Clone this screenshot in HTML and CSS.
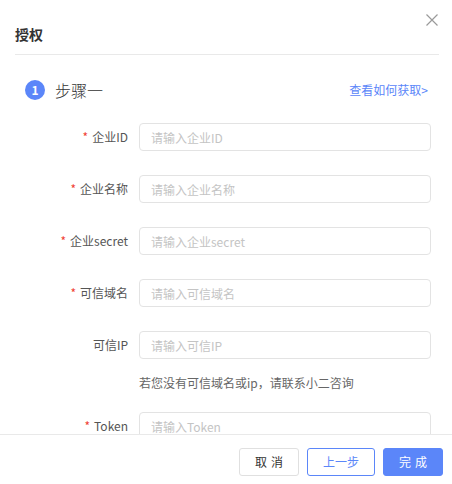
FILE: index.html
```html
<!DOCTYPE html>
<html lang="zh-CN">
<head>
<meta charset="utf-8">
<title>授权</title>
<link rel="stylesheet" href="styles.css">
</head>
<body>
<div class="modal">
  <div class="modal-header">
    <div class="modal-title">授权</div>
  </div>
  <button class="modal-close" aria-label="关闭">
    <svg width="12" height="12" viewBox="0 0 12 12"><path d="M0.5 0.5L11.5 11.5M11.5 0.5L0.5 11.5" stroke="#9a9a9a" stroke-width="1.2" fill="none"/></svg>
  </button>
  <div class="modal-body">
    <div class="step-row">
      <div class="step-title">
        <span class="step-num">1</span>
        <span class="step-text">步骤一</span>
      </div>
      <a class="step-link">查看如何获取&gt;</a>
    </div>
    <div class="form">
      <div class="form-item">
        <label class="form-label"><span class="req">*</span>企业ID</label>
        <div class="form-control"><input class="input" placeholder="请输入企业ID"></div>
      </div>
      <div class="form-item">
        <label class="form-label"><span class="req">*</span>企业名称</label>
        <div class="form-control"><input class="input" placeholder="请输入企业名称"></div>
      </div>
      <div class="form-item">
        <label class="form-label"><span class="req">*</span>企业secret</label>
        <div class="form-control"><input class="input" placeholder="请输入企业secret"></div>
      </div>
      <div class="form-item">
        <label class="form-label"><span class="req">*</span>可信域名</label>
        <div class="form-control"><input class="input" placeholder="请输入可信域名"></div>
      </div>
      <div class="form-item form-item-hint">
        <label class="form-label">可信IP</label>
        <div class="form-control">
          <input class="input" placeholder="请输入可信IP">
          <div class="hint">若您没有可信域名或ip，请联系小二咨询</div>
        </div>
      </div>
      <div class="form-item">
        <label class="form-label"><span class="req">*</span>Token</label>
        <div class="form-control"><input class="input" placeholder="请输入Token"></div>
      </div>
    </div>
  </div>
  <div class="modal-footer">
    <button class="btn"><span class="btn-two">取消</span></button>
    <button class="btn btn-outline">上一步</button>
    <button class="btn btn-primary"><span class="btn-two">完成</span></button>
  </div>
</div>
</body>
</html>
```

FILE: styles.css
```css
* { box-sizing: border-box; }
html, body {
  margin: 0;
  padding: 0;
  background: #fff;
}
body {
  font-family: "Noto Sans CJK SC", "Noto Sans", sans-serif;
  color: #333;
}
.modal {
  position: relative;
  width: 452px;
  height: 484px;
  display: flex;
  flex-direction: column;
  overflow: hidden;
  background: #fff;
}
.modal-header {
  flex: none;
  height: 55px;
  margin: 0 13px 0 15px;
  padding-top: 24px;
  border-bottom: 1px solid #e9e9e9;
}
.modal-title {
  font-size: 14px;
  line-height: 20px;
  font-weight: 600;
  color: #333;
}
.modal-close {
  position: absolute;
  top: 14px;
  right: 14px;
  width: 12px;
  height: 12px;
  padding: 0;
  border: 0;
  background: none;
  display: flex;
}
.modal-body {
  flex: 1;
  overflow: hidden;
}
.step-row {
  margin-top: 25px;
  height: 20px;
  padding: 0 24px 0 25px;
  display: flex;
  align-items: center;
  justify-content: space-between;
}
.step-title {
  display: flex;
  align-items: center;
}
.step-num {
  width: 20px;
  height: 20px;
  border-radius: 50%;
  background: #5b86f9;
  color: #fff;
  font-size: 12px;
  font-weight: 700;
  line-height: 20px;
  text-align: center;
}
.step-text {
  margin-left: 10px;
  font-size: 16px;
  line-height: 20px;
  font-weight: 300;
  color: #333;
}
.step-link {
  font-size: 12px;
  line-height: 20px;
  color: #5b86f9;
  cursor: pointer;
}
.form {
  margin-top: 23px;
}
.form-item {
  display: flex;
  align-items: flex-start;
  margin-bottom: 24px;
}
.form-item-hint {
  margin-bottom: 19px;
}
.form-label {
  flex: none;
  width: 139px;
  padding-right: 11px;
  text-align: right;
  font-size: 12px;
  line-height: 28px;
  color: #555;
}
.req {
  color: #f04134;
  margin-right: 4px;
  font-size: 12px;
}
.form-control {
  width: 292px;
}
.input {
  display: block;
  width: 292px;
  height: 28px;
  padding: 0 11px;
  border: 1px solid #e3e3e3;
  border-radius: 4px;
  font-family: inherit;
  font-size: 12px;
  color: #333;
  outline: none;
  background: #fff;
}
.input::placeholder {
  color: #c4c4c4;
}
.hint {
  margin-top: 14px;
  font-size: 12px;
  line-height: 20px;
  color: #666;
}
.modal-footer {
  flex: none;
  height: 50px;
  border-top: 1px solid #e9e9e9;
  display: flex;
  justify-content: flex-end;
  align-items: flex-start;
  padding: 13px 9px 0 0;
  gap: 8px;
}
.btn {
  flex: none;
  height: 28px;
  padding: 0 15px;
  border: 1px solid #e0e0e0;
  border-radius: 3px;
  background: #fff;
  font-family: inherit;
  font-size: 12px;
  line-height: 26px;
  white-space: nowrap;
  color: #333;
  cursor: pointer;
}
.btn-two {
  letter-spacing: 4px;
  margin-right: -4px;
}
.btn-outline {
  border-color: #5b86f9;
  color: #5b86f9;
}
.btn-primary {
  border-color: #5b86f9;
  background: #5b86f9;
  color: #fff;
}
```
